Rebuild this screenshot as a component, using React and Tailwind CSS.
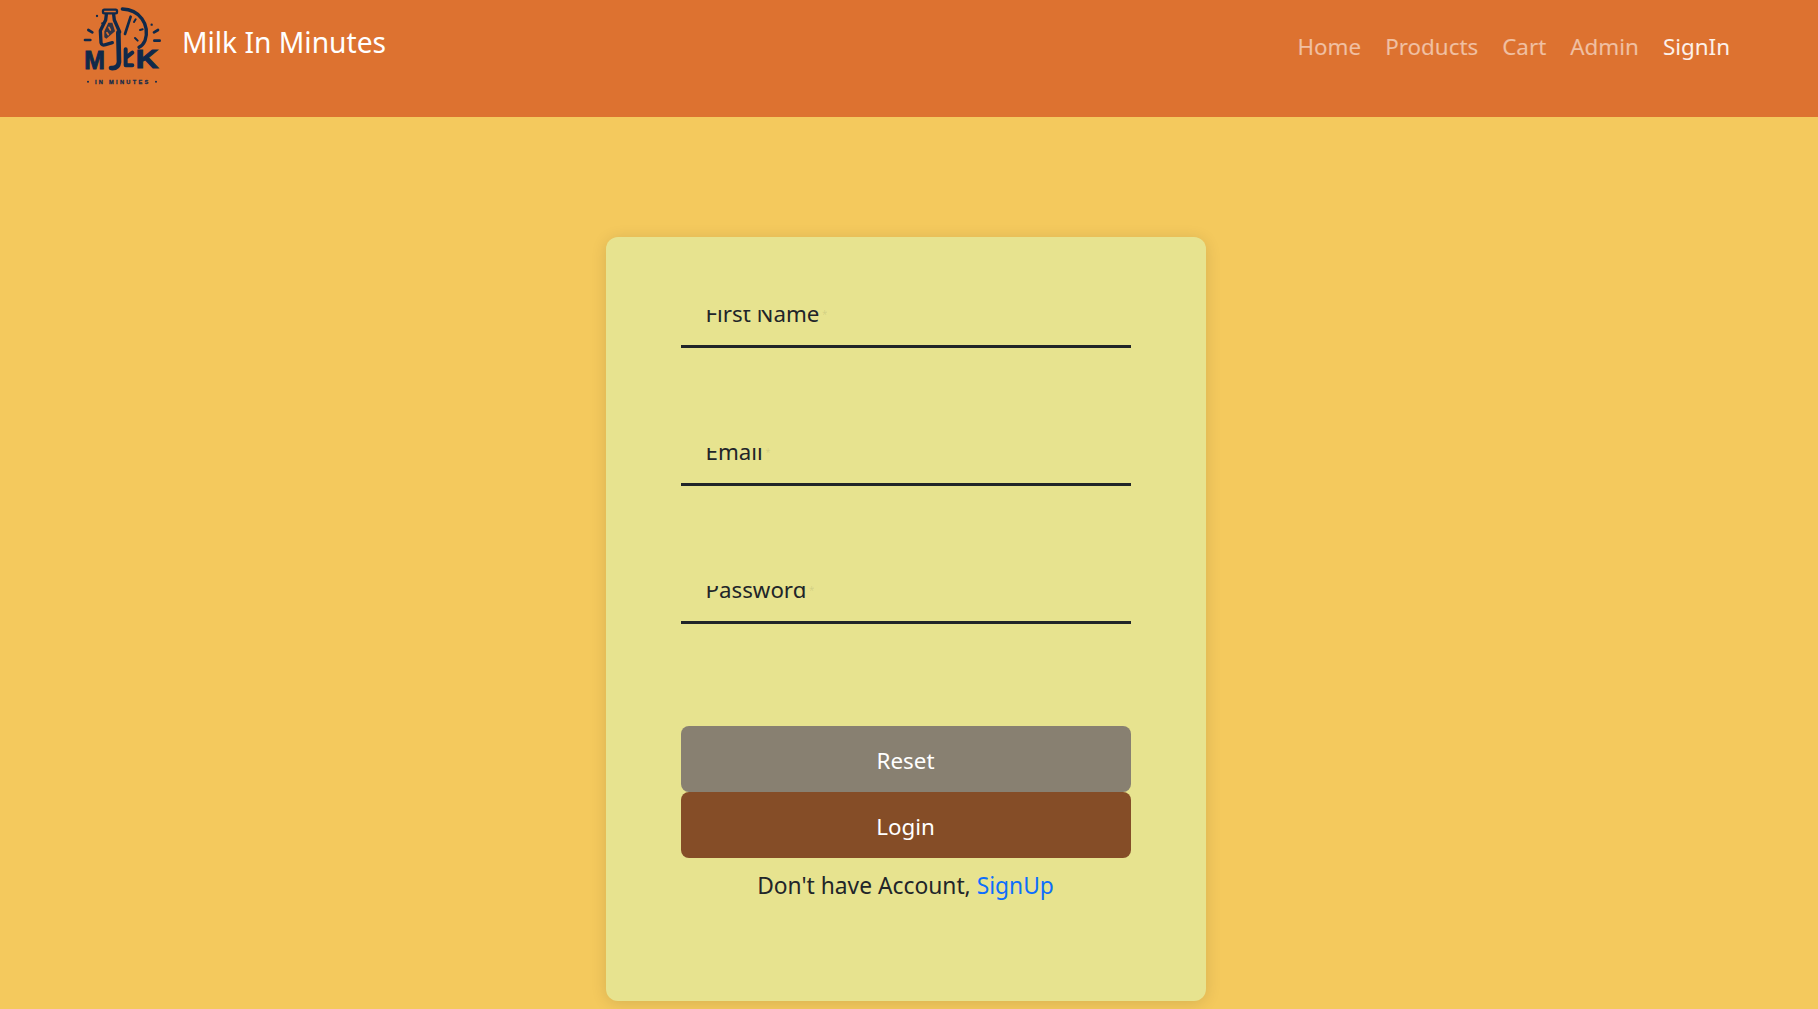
const font = { fontFamily: '"Noto Sans", sans-serif' };

function Logo() {
  const navy = "#10294a";
  return (
    <svg viewBox="0 0 288 288" className="w-[96px] h-[96px] shrink-0" fill="none">
      <g stroke={navy} strokeLinecap="round" strokeLinejoin="round">
        <rect x="84" y="29" width="42" height="11" rx="4" strokeWidth="7" />
        <path d="M94 44 L92 60 L76 92 L78 128 Q80 138 92 134 L112 128 M116 44 L118 60 L134 96" strokeWidth="10" />
        <path d="M100 68 L112 68 L120 94 L94 116 L88 112 L88 94 Z" stroke="none" fill={navy} opacity="0.85" />
        <path d="M102 82 L106 90 M96 98 L100 104" stroke="#dd7230" strokeWidth="5" />
        <path d="M130 98 L132 186 Q130 206 108 204" strokeWidth="14" />
        <path d="M142 27 C192 28 226 72 210 122 Q204 136 192 142" strokeWidth="10" />
        <path d="M167 50 L150 102" strokeWidth="8" />
        <path d="M182 58 L177 66 M203 88 L195 90 M188 122 L180 114" strokeWidth="6" />
        <path d="M66 48 L66 48 M82 70 L82 70 M230 74 L230 74" strokeWidth="7" />
        <path d="M40 90 L52 97 M30 120 L46 120 M237 97 L249 90 M238 122 L254 122" strokeWidth="8" />
        <path d="M152 148 L152 196 L172 196 M172 158 L154 172" strokeWidth="12" />
      </g>
      <g fill={navy} stroke={navy} style={{ fontFamily: '"Liberation Sans", sans-serif', fontWeight: 700 }}>
        <text x="28" y="206" fontSize="80" strokeWidth="3" textLength="62" lengthAdjust="spacingAndGlyphs">M</text>
        <text x="182" y="205" fontSize="78" strokeWidth="3" textLength="68" lengthAdjust="spacingAndGlyphs">K</text>
        <text x="60" y="251" fontSize="17" strokeWidth="0.8" textLength="160" lengthAdjust="spacing">IN MINUTES</text>
      </g>
      <circle cx="39" cy="245" r="3" fill={navy} />
      <circle cx="243" cy="245" r="3" fill={navy} />
    </svg>
  );
}

function Field({ label }) {
  return (
    <div className="h-[48px] border-b-[3px] border-[#212529] pl-[25px] pt-[10px]">
      <div className="h-full overflow-hidden">
        <div className="-mt-[12px] text-[22.3px] leading-[32px] text-[#212529]">
          {label}
          <span className="text-[#212529]/10 text-[10px] align-top"> *</span>
        </div>
      </div>
    </div>
  );
}

export default function App() {
  return (
    <div style={font} className="min-h-[1009px] bg-[#f4c95d] overflow-hidden">
      <header className="h-[117px] bg-[#dd7230] flex items-start justify-between pl-[75px] pr-[88px]">
        <div className="flex items-start">
          <Logo />
          <div className="ml-[11px] mt-[22px] text-[28.2px] leading-[40px] text-white">Milk In Minutes</div>
        </div>
        <nav className="flex gap-[24px] mt-[30px] text-[22.4px] leading-[34px] text-white/55">
          <span>Home</span>
          <span>Products</span>
          <span>Cart</span>
          <span>Admin</span>
          <span className="text-white/90">SignIn</span>
        </nav>
      </header>
      <main className="flex justify-center pt-[120px] pr-[7px]">
        <div className="w-[600px] h-[764px] bg-[#e7e38f] rounded-[12px] shadow-[0_2px_16px_rgba(0,0,0,0.12)] px-[75px] pt-[63px]">
          <div className="flex flex-col gap-[90px]">
            <Field label="First Name" />
            <Field label="Email" />
            <Field label="Password" />
          </div>
          <div className="mt-[102px] flex flex-col">
            <button className="h-[66px] pt-[3px] rounded-[8px] bg-[#888071] text-white text-[22.4px]">Reset</button>
            <button className="h-[66px] pt-[3px] rounded-[8px] bg-[#854d27] text-white text-[22.4px]">Login</button>
          </div>
          <p className="mt-[11px] text-center text-[22.8px] leading-[34px] text-[#212529]">
            Don't have Account, <a className="text-[#0d6efd]">SignUp</a>
          </p>
        </div>
      </main>
    </div>
  );
}
